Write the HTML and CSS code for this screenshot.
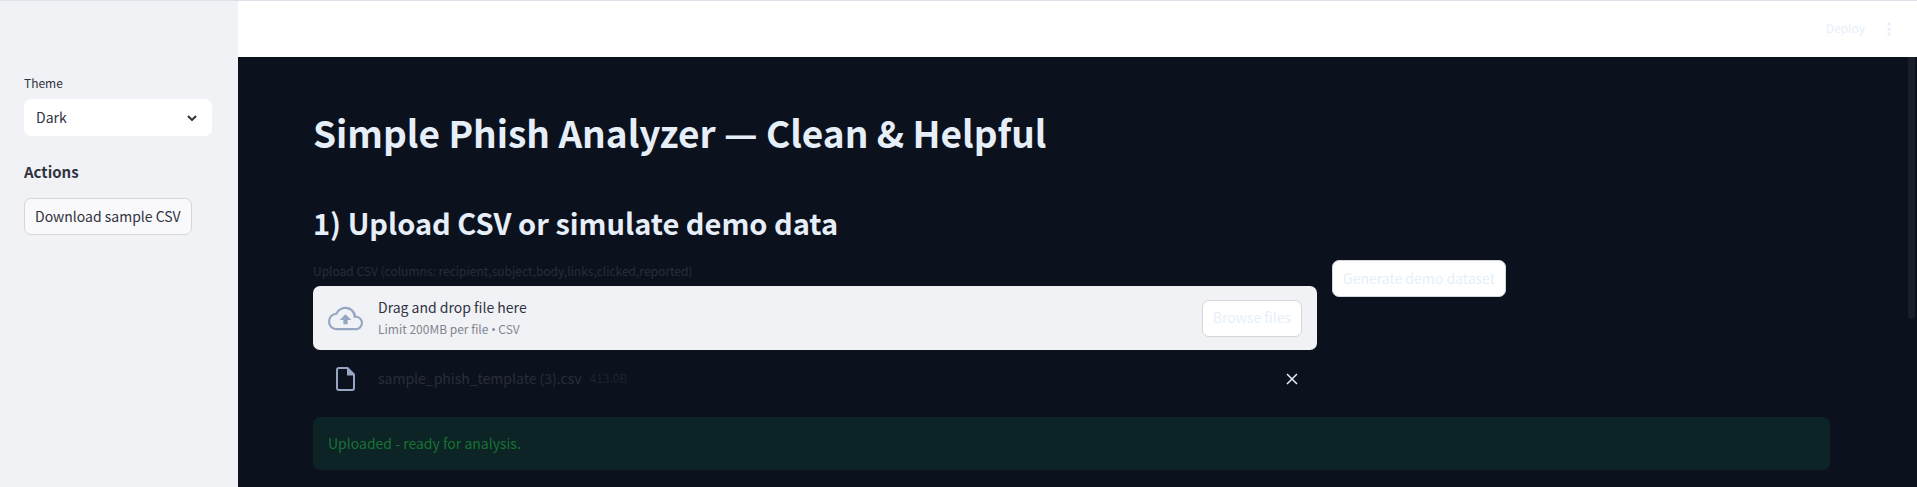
FILE: index.html
```html
<!DOCTYPE html>
<html lang="en">
<head>
<meta charset="utf-8">
<title>Simple Phish Analyzer</title>
<link rel="stylesheet" href="styles.css">
</head>
<body>
<div class="app">
  <aside class="sidebar">
    <label class="label" for="theme">Theme</label>
    <div class="select-box">
      <select id="theme" class="select"><option>Dark</option><option>Light</option></select>
      <svg class="chevron" viewBox="0 0 10 6" aria-hidden="true"><path d="M1 1l4 4 4-4"/></svg>
    </div>
    <h3 class="sidebar-title">Actions</h3>
    <button class="button button-soft" type="button">Download sample CSV</button>
  </aside>
  <div class="page">
    <header class="toolbar">
      <button class="deploy" type="button">Deploy</button>
      <button class="icon-button" type="button" aria-label="Menu">
        <svg class="dots" viewBox="0 0 4 14" aria-hidden="true"><circle cx="2" cy="2" r="1.7"/><circle cx="2" cy="7" r="1.7"/><circle cx="2" cy="12" r="1.7"/></svg>
      </button>
    </header>
    <main class="main">
      <h1 class="title">Simple Phish Analyzer — Clean &amp; Helpful</h1>
      <h2 class="subtitle">1) Upload CSV or simulate demo data</h2>
      <div class="columns">
        <section class="uploader">
          <p class="label upload-label">Upload CSV (columns: recipient,subject,body,links,clicked,reported)</p>
          <div class="dropzone">
            <svg class="cloud" viewBox="0 0 24 24" aria-hidden="true"><path d="M19.35 10.04A7.49 7.49 0 0 0 12 4C9.11 4 6.6 5.64 5.35 8.04A5.994 5.994 0 0 0 0 14c0 3.31 2.69 6 6 6h13c2.76 0 5-2.24 5-5 0-2.64-2.05-4.78-4.65-4.96zM19 18.5H6c-2.49 0-4.5-2.01-4.5-4.5s2.01-4.5 4.5-4.5h.4C7 7.2 9.2 5.500 12 5.500c3.040 0 5.500 2.460 5.500 5.500v.5H19c1.930 0 3.500 1.570 3.500 3.500s-1.570 3.500-3.500 3.500z"/><path d="M8 13h2.550v3h2.900v-3H16l-4-4z"/></svg>
            <div class="drop-text">
              <span>Drag and drop file here</span>
              <small class="hint">Limit 200MB per file <span class="bullet">•</span> CSV</small>
            </div>
            <button class="button" type="button">Browse files</button>
          </div>
          <div class="file">
            <svg class="doc" viewBox="0 0 19 24" aria-hidden="true"><path class="outline" d="M3 1h8.500L18 7.500V21a2 2 0 0 1-2 2H3a2 2 0 0 1-2-2V3a2 2 0 0 1 2-2z"/><path class="fold" d="M11 1v7.500h7.500z"/></svg>
            <span class="file-name">sample_phish_template (3).csv</span>
            <small class="file-size">413.0B</small>
            <button class="icon-button" type="button" aria-label="Remove file">
              <svg class="cross" viewBox="0 0 12 12" aria-hidden="true"><path d="M1 1l10 10M11 1L1 11"/></svg>
            </button>
          </div>
        </section>
        <div class="demo"><button class="button" type="button">Generate demo dataset</button></div>
      </div>
      <p class="alert" role="status">Uploaded - ready for analysis.</p>
    </main>
    <div class="scroll-thumb"></div>
  </div>
</div>
</body>
</html>
```

FILE: styles.css
```css
* { box-sizing: border-box; }

body {
  margin: 0;
  background: #0b121e;
  color: #31333f;
  font: 14px/22px "Noto Sans CJK SC", "Noto Sans", sans-serif;
}

h1, h2, h3, p { margin: 0; }

button, select { font: inherit; color: inherit; }

button { cursor: pointer; }

.app {
  display: flex;
  min-height: 100vh;
  border-top: 1px solid #dfe1ea;
}

.sidebar {
  flex: none;
  width: 238px;
  padding: 72px 26px 24px 24px;
  background: #f0f2f6;
}

.label {
  display: block;
  font-size: 12px;
  line-height: 20px;
}

.select-box {
  display: grid;
  align-items: center;
  margin-top: 6px;
}

.select {
  grid-area: 1 / 1;
  width: 100%;
  height: 37px;
  padding: 0 12px 2px;
  border: 0;
  border-radius: 7px;
  background: #fff;
  appearance: none;
}

.chevron {
  grid-area: 1 / 1;
  justify-self: end;
  width: 10px;
  height: 6px;
  margin-right: 15px;
  fill: none;
  stroke: #31333f;
  stroke-width: 2;
  pointer-events: none;
}

.sidebar-title {
  margin: 24px 0 14px;
  font-size: 15px;
  font-weight: 600;
  line-height: 24px;
}

.button {
  height: 37px;
  padding: 0 10px 2px;
  border: 1px solid #d6d6d9;
  border-radius: 7px;
  background: #fff;
  color: #e6f0fa;
  white-space: nowrap;
}

.button-soft {
  background: #f9f9fb;
  color: #31333f;
}

.page {
  position: relative;
  flex: 1;
  min-width: 0;
}

.toolbar {
  display: flex;
  align-items: center;
  justify-content: flex-end;
  gap: 18px;
  height: 56px;
  padding-right: 22px;
  background: #fff;
  color: #e6f0fa;
}

.deploy {
  padding: 0 0 2px;
  border: 0;
  background: none;
  font-size: 12px;
}

.icon-button {
  display: flex;
  align-items: center;
  justify-content: center;
  width: 12px;
  height: 24px;
  padding: 0;
  border: 0;
  background: none;
}

.dots {
  width: 4px;
  height: 14px;
  fill: #e6f0fa;
}

.main { padding: 47px 87px 16px 75px; }

.title {
  color: #e6eef8;
  font-size: 37px;
  font-weight: 700;
  line-height: 56px;
}

.subtitle {
  margin: 39px 0 16px;
  color: #e6eef8;
  font-size: 29px;
  font-weight: 600;
  line-height: 46px;
}

.columns {
  display: grid;
  grid-template-columns: 2.016fr 1fr;
  gap: 15px;
}

.upload-label { color: #2a2d38; }

.demo { margin-top: -1px; }

.dropzone {
  display: flex;
  align-items: center;
  height: 64px;
  margin-top: 5px;
  padding: 0 15px;
  border-radius: 7px;
  background: #f0f2f6;
}

.cloud {
  width: 35px;
  height: 35px;
  margin-right: 15px;
  fill: #97a6c3;
}

.drop-text {
  display: flex;
  flex: 1;
  flex-direction: column;
}

.hint {
  color: #83858e;
  font-size: 12px;
}

.bullet { font-family: "Open Sans", sans-serif; }

.file {
  display: flex;
  align-items: center;
  height: 58px;
  padding: 0 19px 0 23px;
  color: #2a2d38;
}

.file-name, .file-size { padding-bottom: 2px; }

.doc {
  width: 19px;
  height: 24px;
  margin-right: 23px;
}

.outline {
  fill: none;
  stroke: #97a6c3;
  stroke-width: 2;
}

.fold { fill: #97a6c3; }

.file-size {
  flex: 1;
  margin-left: 8px;
  color: #1f232f;
  font-size: 12px;
}

.cross {
  width: 12px;
  height: 12px;
  fill: none;
  stroke: #e6f0fa;
  stroke-width: 1.5;
}

.alert {
  margin-top: 9px;
  padding: 15px 15px 16px;
  border-radius: 7px;
  background: #0d2426;
  color: #177233;
}

.scroll-thumb {
  position: absolute;
  top: 56px;
  right: 2px;
  width: 7px;
  height: 262px;
  border-radius: 0 0 4px 4px;
  background: #1b1f2b;
}
```
